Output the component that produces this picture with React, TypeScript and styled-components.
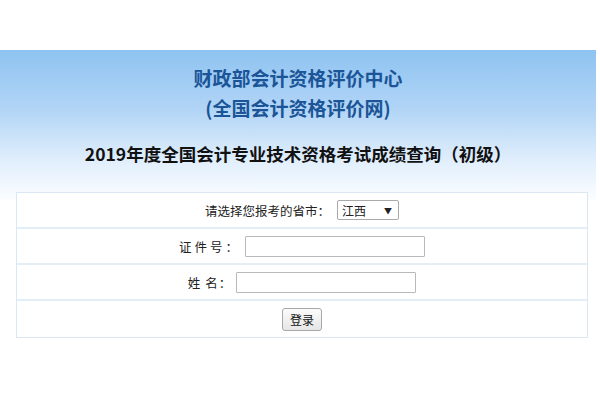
import React from "react"
import styled, { createGlobalStyle } from "styled-components"

const GlobalStyle = createGlobalStyle`
  html, body {
    margin: 0;
    padding: 0;
    background: #ffffff;
    font-family: "Liberation Sans", "Noto Sans CJK SC", sans-serif;
  }
`

const Page = styled.div`
  width: 600px;
  height: 400px;
  padding-top: 50px;
  box-sizing: border-box;
  overflow: hidden;
`

const Banner = styled.section`
  margin-right: 4px;
  padding: 13px 0 0;
  height: 150px;
  box-sizing: border-box;
  background: linear-gradient(180deg, #8ec3f1 0%, #b2d5f6 40%, #e2effc 75%, #f3f9ff 92%, #fbfdff 100%);
  display: flex;
  flex-direction: column;
  align-items: center;
`

const SiteTitle = styled.h1`
  margin: 0;
  font-family: "Noto Sans CJK SC", sans-serif;
  font-size: 19px;
  line-height: 30px;
  font-weight: 700;
  color: #1b5597;
  text-align: center;
`

const QueryTitle = styled.h2`
  margin: 18px 0 0;
  font-family: "Noto Sans CJK SC", sans-serif;
  font-size: 17.5px;
  line-height: 26px;
  font-weight: 700;
  color: #111111;
  text-align: center;
`

const Form = styled.form`
  margin: -8px 12px 0 16px;
  border: 1px solid #dbe8f3;
  background: #ffffff;
  display: flex;
  flex-direction: column;
  position: relative;
`

const Row = styled.div<{ $last?: boolean }>`
  height: 36px;
  display: flex;
  align-items: center;
  justify-content: center;
  border-bottom: ${p => (p.$last ? "none" : "2px solid #e3eef7")};
  box-sizing: border-box;
  font-family: "Noto Sans CJK SC", sans-serif;
  font-size: 12.5px;
  color: #222222;
`

const Label = styled.label<{ $spacing?: number }>`
  letter-spacing: ${p => p.$spacing ?? 0}px;
  margin-right: 4px;
  white-space: pre;
`

const Select = styled.div`
  width: 62px;
  height: 20px;
  box-sizing: border-box;
  border: 1px solid #a9a9a9;
  border-radius: 2px;
  background: #ffffff;
  display: flex;
  align-items: center;
  justify-content: space-between;
  padding: 0 6px 0 4px;
  font-size: 12px;
`

const Caret = styled.span`
  font-size: 8px;
  color: #222;
`

const TextInput = styled.input`
  width: 180px;
  height: 21px;
  box-sizing: border-box;
  border: 1px solid #b9b9b9;
  border-radius: 1px;
  padding: 0 3px;
  background: #ffffff;
`

const Button = styled.button`
  width: 40px;
  height: 23px;
  box-sizing: border-box;
  border: 1px solid #a8a8a8;
  border-radius: 3px;
  background: linear-gradient(180deg, #fbfbfb 0%, #e6e6e6 100%);
  font-family: "Noto Sans CJK SC", sans-serif;
  font-size: 12px;
  color: #111111;
  padding: 0;
`

const App = () => {
  return (
    <Page>
      <GlobalStyle />
      <Banner>
        <SiteTitle>
          财政部会计资格评价中心
          <br />
          (全国会计资格评价网)
        </SiteTitle>
        <QueryTitle>2019年度全国会计专业技术资格考试成绩查询（初级）</QueryTitle>
      </Banner>
      <Form>
        <Row>
          <Label>请选择您报考的省市： </Label>
          <Select>
            江西
            <Caret>▼</Caret>
          </Select>
        </Row>
        <Row>
          <Label $spacing={3}>证件号：</Label>
          <TextInput type="text" />
        </Row>
        <Row>
          <Label $spacing={1}>姓 名：</Label>
          <TextInput type="text" />
        </Row>
        <Row $last>
          <Button type="button">登录</Button>
        </Row>
      </Form>
    </Page>
  )
}

export default App
